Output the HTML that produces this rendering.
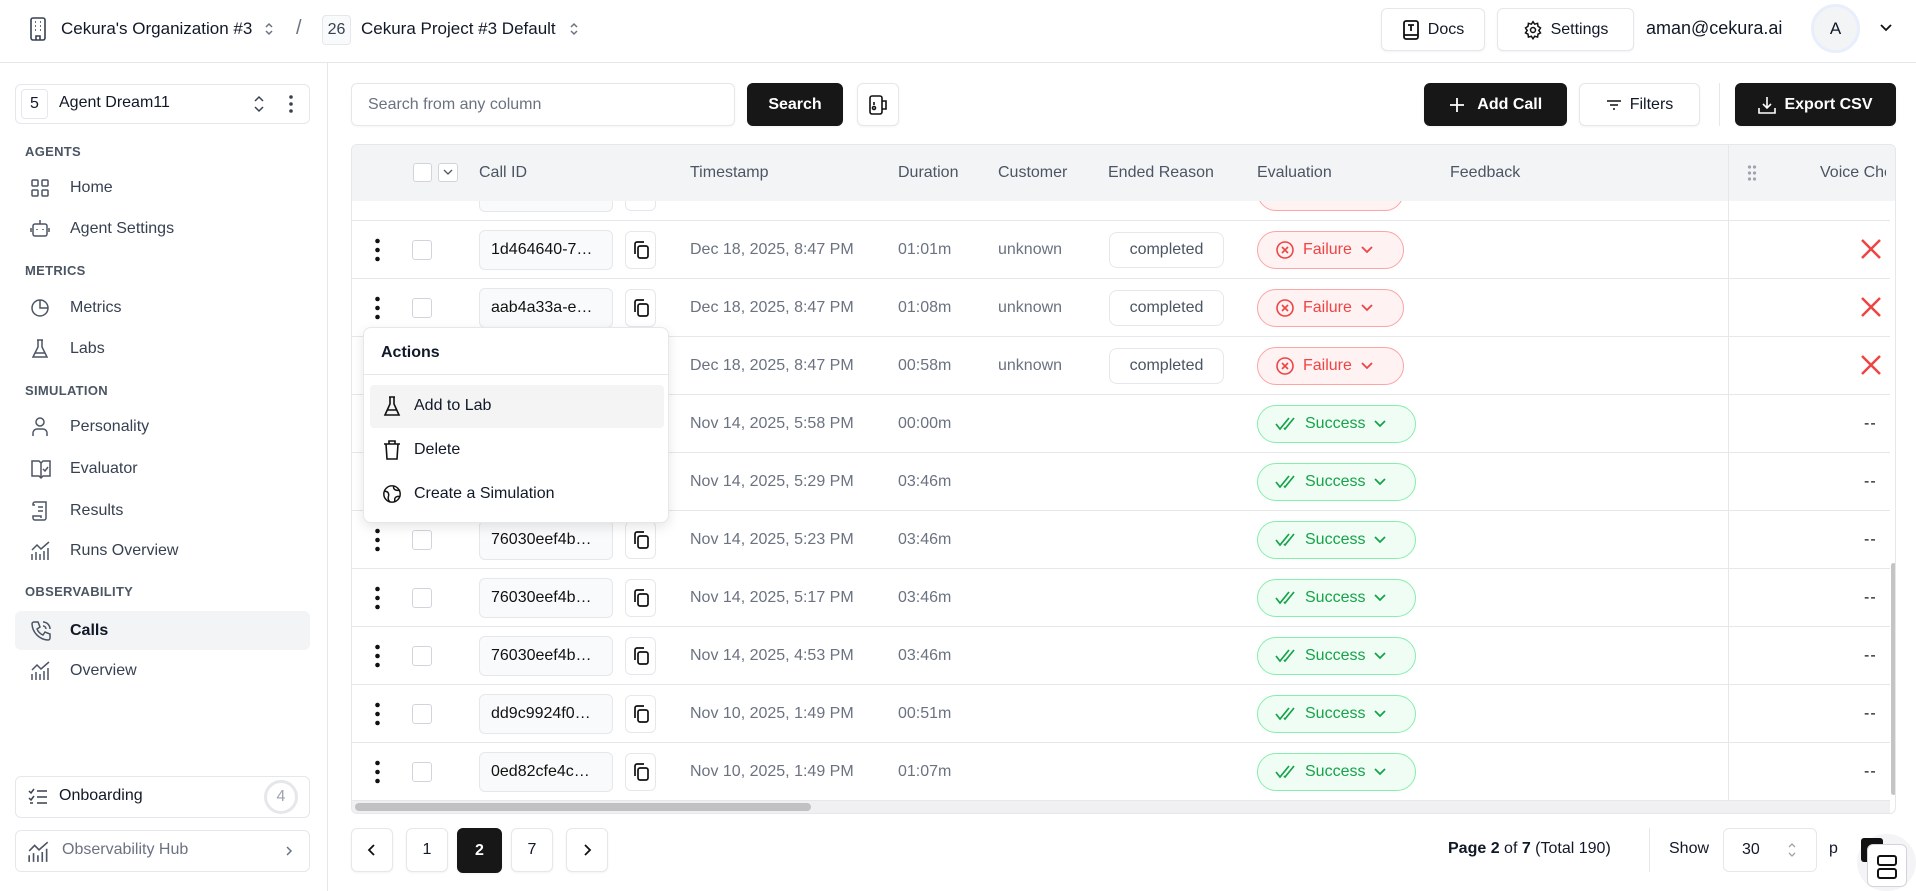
<!DOCTYPE html>
<html><head><meta charset="utf-8">
<style>
*{box-sizing:border-box;margin:0;padding:0}
body{width:1916px;height:891px;position:relative;overflow:hidden;background:#fff;font-family:"Liberation Sans",sans-serif;color:#111827;font-size:16px}
.a{position:absolute}
.btn{position:absolute;border:1px solid #e5e7eb;border-radius:6px;background:#fff;display:flex;align-items:center;justify-content:center;gap:8px;font-size:16px;box-shadow:0 1px 2px rgba(0,0,0,.05)}
.dark{background:#171717;color:#fff;border-color:#171717;font-weight:bold}
.sec{position:absolute;left:25px;font-size:13px;font-weight:bold;color:#4b5563;letter-spacing:.3px}
.it{position:absolute;left:15px;width:295px;height:39px;display:flex;align-items:center;font-size:16px;color:#374151}
.it svg{position:absolute;left:15px}
.it span{position:absolute;left:55px}
.row{position:absolute;left:351px;width:1538px;height:58px;border-bottom:1px solid #e5e7eb;background:#fff}
.row>*{position:absolute}
.dots{left:23px;top:17px;width:5px;height:24px}
.cb{left:60px;top:19px;width:20px;height:20px;border:1px solid #d1d5db;border-radius:3px;background:#fff}
.id{left:127px;top:9px;width:134px;height:40px;background:#f9fafb;border:1px solid #e5e7eb;border-radius:6px;padding-left:11px;line-height:38px;color:#111;white-space:nowrap;overflow:hidden}
.cp{left:273px;top:10px;width:31px;height:38px;border:1px solid #e5e7eb;border-radius:6px;display:flex;align-items:center;justify-content:center}
.ts{left:338px;top:20px;color:#6b7280}
.du{left:546px;top:20px;color:#6b7280}
.cu{left:646px;top:20px;color:#6b7280}
.er{left:757px;top:11px;width:115px;height:36px;border:1px solid #e5e7eb;border-radius:8px;text-align:center;line-height:34px;color:#4b5563}
.fail{left:905px;top:10px;width:147px;height:38px;border:1px solid #fca5a5;background:#fef2f2;border-radius:19px;color:#ef4444;display:flex;align-items:center;padding-left:17px;gap:8px}
.succ{left:905px;top:10px;width:159px;height:38px;border:1px solid #86efac;background:#f0fdf4;border-radius:19px;color:#16a34a;display:flex;align-items:center;padding-left:17px;gap:8px}
.vd{left:1376px;top:0;width:1px;height:58px;background:#e5e7eb}
.x{left:1507px;top:16px}
.dd{left:1512px;top:20px;color:#111;letter-spacing:1px}
</style></head><body>

<div class="a" style="left:0;top:62px;width:1916px;height:1px;background:#e5e7eb"></div>
<svg class="a" style="left:26px;top:16px" width="24" height="26" viewBox="0 0 24 26" fill="none" stroke="#374151" stroke-width="1.6"><rect x="5" y="2" width="14" height="22" rx="2"/><path d="M9 6h1M14 6h1M9 10h1M14 10h1M9 14h1M14 14h1M10 24v-4h4v4"/></svg>
<div class="a" style="left:61px;top:19px;font-size:17px">Cekura's Organization #3</div>
<svg class="a" style="left:263px;top:20px" width="12" height="18" viewBox="0 0 12 18" fill="none" stroke="#6b7280" stroke-width="1.5"><path d="M3 7l3-3 3 3M3 11l3 3 3-3"/></svg>
<div class="a" style="left:296px;top:17px;font-size:20px;color:#6b7280">/</div>
<div class="a" style="left:322px;top:15px;width:29px;height:30px;border:1px solid #e5e7eb;background:#f9fafb;border-radius:4px;text-align:center;line-height:28px;font-size:16px;color:#374151">26</div>
<div class="a" style="left:361px;top:19px;font-size:17px">Cekura Project #3 Default</div>
<svg class="a" style="left:568px;top:20px" width="12" height="18" viewBox="0 0 12 18" fill="none" stroke="#6b7280" stroke-width="1.5"><path d="M3 7l3-3 3 3M3 11l3 3 3-3"/></svg>

<div class="btn" style="left:1381px;top:8px;width:104px;height:43px"><svg width="18" height="22" viewBox="0 0 18 22" fill="none" stroke="#111" stroke-width="1.8"><rect x="2" y="2" width="14" height="18" rx="2"/><path d="M6 6h6M9 6v6M2 16h14"/></svg>Docs</div>
<div class="btn" style="left:1497px;top:8px;width:137px;height:43px"><svg width="20" height="20" viewBox="0 0 24 24" fill="none" stroke="#111" stroke-width="1.8"><circle cx="12" cy="12" r="3"/><path d="M12 2l2 3 3.5-1 .5 3.5 3 2-2 3 2 3-3 1.5-.5 3.5-3.5-1-2 3-2-3-3.5 1-.5-3.5-3-1.5 2-3-2-3 3-2 .5-3.5 3.5 1z"/></svg>Settings</div>
<div class="a" style="left:1646px;top:18px;font-size:18px">aman@cekura.ai</div>
<div class="a" style="left:1811px;top:4px;width:49px;height:49px;border-radius:50%;background:#f3f4f6;border:3px solid #e8eefc;text-align:center;line-height:43px;font-size:17px">A</div>
<svg class="a" style="left:1879px;top:22px" width="14" height="12" viewBox="0 0 14 12" fill="none" stroke="#111" stroke-width="1.8"><path d="M2 3l5 5 5-5"/></svg>

<div class="a" style="left:327px;top:63px;width:1px;height:828px;background:#e5e7eb"></div>
<div class="a" style="left:15px;top:84px;width:295px;height:40px;border:1px solid #e5e7eb;border-radius:6px"></div>
<div class="a" style="left:21px;top:89px;width:27px;height:30px;border:1px solid #e5e7eb;border-radius:4px;text-align:center;line-height:28px">5</div>
<div class="a" style="left:59px;top:94px;font-size:16px">Agent Dream11</div>
<svg class="a" style="left:252px;top:94px" width="14" height="20" viewBox="0 0 14 20" fill="none" stroke="#374151" stroke-width="1.5"><path d="M3 7l4-4 4 4M3 13l4 4 4-4"/></svg>
<svg class="a" style="left:288px;top:94px" width="6" height="20" viewBox="0 0 6 20" fill="#374151"><circle cx="3" cy="3" r="1.8"/><circle cx="3" cy="10" r="1.8"/><circle cx="3" cy="17" r="1.8"/></svg>

<div class="sec" style="top:144px">AGENTS</div>
<div class="it" style="top:168px"><svg width="20" height="20" viewBox="0 0 20 20" fill="none" stroke="#4b5563" stroke-width="1.5"><rect x="2" y="2" width="6" height="6" rx="1"/><rect x="12" y="2" width="6" height="6" rx="1"/><rect x="2" y="12" width="6" height="6" rx="1"/><rect x="12" y="12" width="6" height="6" rx="1"/></svg><span>Home</span></div>
<div class="it" style="top:209px"><svg width="20" height="22" viewBox="0 0 20 22" fill="none" stroke="#4b5563" stroke-width="1.5"><rect x="3" y="6" width="14" height="12" rx="2"/><path d="M10 2v4M7 11v1M13 11v1M1 10v4M19 10v4"/></svg><span>Agent Settings</span></div>
<div class="sec" style="top:263px">METRICS</div>
<div class="it" style="top:288px"><svg width="20" height="20" viewBox="0 0 20 20" fill="none" stroke="#4b5563" stroke-width="1.5"><circle cx="10" cy="10" r="8"/><path d="M10 2v8h8"/></svg><span>Metrics</span></div>
<div class="it" style="top:329px"><svg width="20" height="22" viewBox="0 0 20 22" fill="none" stroke="#4b5563" stroke-width="1.5"><path d="M7 2h6M8 2v7L3 19h14L12 9V2M5 15h10"/></svg><span>Labs</span></div>
<div class="sec" style="top:383px">SIMULATION</div>
<div class="it" style="top:407px"><svg width="20" height="22" viewBox="0 0 20 22" fill="none" stroke="#4b5563" stroke-width="1.5"><circle cx="10" cy="6" r="4"/><path d="M3 20v-3a4 4 0 014-4h6a4 4 0 014 4v3"/></svg><span>Personality</span></div>
<div class="it" style="top:449px"><svg width="22" height="22" viewBox="0 0 22 22" fill="none" stroke="#4b5563" stroke-width="1.5"><path d="M2 3h7l2 2 2-2h7v15h-7l-2 2-2-2H2zM11 5v15M13 11l2 2 3-4"/></svg><span>Evaluator</span></div>
<div class="it" style="top:491px"><svg width="20" height="22" viewBox="0 0 20 22" fill="none" stroke="#4b5563" stroke-width="1.5"><path d="M5 2h11v16a2 2 0 01-2 2H5a2 2 0 01-2-2v-2h8v2M5 2a2 2 0 00-2 2v1h2M8 7h5M8 11h5"/></svg><span>Results</span></div>
<div class="it" style="top:531px"><svg width="22" height="22" viewBox="0 0 22 22" fill="none" stroke="#4b5563" stroke-width="1.5"><path d="M2 20V14M6 20v-8M10 20v-6M14 20v-9M18 20v-12M2 10l5-5 4 4 8-7"/></svg><span>Runs Overview</span></div>
<div class="sec" style="top:584px">OBSERVABILITY</div>
<div class="it" style="top:611px;background:#f3f4f6;border-radius:6px;color:#111827;font-weight:bold"><svg width="22" height="22" viewBox="0 0 22 22" fill="none" stroke="#4b5563" stroke-width="1.5"><path d="M4 2h4l2 5-3 2a11 11 0 006 6l2-3 5 2v4a2 2 0 01-2 2A17 17 0 012 4a2 2 0 012-2zM13 2a7 7 0 017 7M13 6a3 3 0 013 3"/></svg><span>Calls</span></div>
<div class="it" style="top:651px"><svg width="22" height="22" viewBox="0 0 22 22" fill="none" stroke="#4b5563" stroke-width="1.5"><path d="M2 20V14M6 20v-8M10 20v-6M14 20v-9M18 20v-12M2 10l5-5 4 4 8-7"/></svg><span>Overview</span></div>

<div class="a" style="left:15px;top:776px;width:295px;height:42px;border:1px solid #e5e7eb;border-radius:6px"></div>
<svg class="a" style="left:28px;top:787px" width="20" height="20" viewBox="0 0 20 20" fill="none" stroke="#374151" stroke-width="1.5"><path d="M1 4l2 2 3-4M1 11l2 2 3-4M9 4h10M9 10h10M9 16h10M2 16h3"/></svg>
<div class="a" style="left:59px;top:787px;font-size:16px">Onboarding</div>
<div class="a" style="left:264px;top:780px;width:34px;height:34px;border-radius:50%;border:3px solid #e5e7eb;text-align:center;line-height:28px;color:#9ca3af;font-size:16px">4</div>
<div class="a" style="left:15px;top:830px;width:295px;height:42px;border:1px solid #e5e7eb;border-radius:6px"></div>
<svg class="a" style="left:27px;top:840px" width="24" height="24" viewBox="0 0 22 22" fill="none" stroke="#4b5563" stroke-width="1.5"><path d="M2 20V14M6 20v-8M10 20v-6M14 20v-9M18 20v-12M2 10l5-5 4 4 8-7"/></svg>
<div class="a" style="left:62px;top:841px;font-size:16px;color:#6b7280">Observability Hub</div>
<svg class="a" style="left:285px;top:845px" width="8" height="12" viewBox="0 0 8 12" fill="none" stroke="#6b7280" stroke-width="1.5"><path d="M2 2l4 4-4 4"/></svg>

<div class="a" style="left:351px;top:83px;width:384px;height:43px;border:1px solid #e5e7eb;border-radius:6px;padding-left:16px;line-height:41px;color:#6b7280;box-shadow:0 1px 2px rgba(0,0,0,.04)">Search from any column</div>
<div class="btn dark" style="left:747px;top:83px;width:96px;height:43px">Search</div>
<div class="btn" style="left:857px;top:83px;width:42px;height:43px"><svg width="20" height="22" viewBox="0 0 20 22" fill="none" stroke="#111" stroke-width="1.6"><rect x="2" y="2" width="12" height="18" rx="2"/><path d="M14 7h4v8h-4"/><circle cx="6" cy="14" r="1.5"/><path d="M6 8v3"/></svg></div>
<div class="btn dark" style="left:1424px;top:83px;width:143px;height:43px"><svg width="16" height="16" viewBox="0 0 16 16" stroke="#fff" stroke-width="1.8"><path d="M8 1v14M1 8h14"/></svg>&nbsp;Add Call</div>
<div class="btn" style="left:1579px;top:83px;width:121px;height:43px"><svg width="16" height="12" viewBox="0 0 16 12" stroke="#111" stroke-width="1.6"><path d="M1 2h14M4 6h8M7 10h2"/></svg>Filters</div>
<div class="a" style="left:1719px;top:83px;width:1px;height:43px;background:#e5e7eb"></div>
<div class="btn dark" style="left:1735px;top:83px;width:161px;height:43px"><svg width="18" height="18" viewBox="0 0 18 18" fill="none" stroke="#fff" stroke-width="1.6"><path d="M9 1v11M5 8l4 4 4-4M1 12v5h16v-5"/></svg>Export CSV</div>

<div class="a" style="left:351px;top:144px;width:1545px;height:670px;border:1px solid #e5e7eb;border-radius:6px;overflow:hidden">
<div style="position:absolute;left:-351px;top:-144px;width:1916px;height:891px">

<div class="row" style="top:162px"><div class="id"></div><div class="cp"></div><div class="fail"></div><div class="vd"></div></div>

<div class="row" style="top:220px"><svg class="dots" viewBox="0 0 5 24" fill="#111"><circle cx="2.5" cy="3" r="2.3"/><circle cx="2.5" cy="12" r="2.3"/><circle cx="2.5" cy="21" r="2.3"/></svg><div class="cb"></div><div class="id">1d464640-7…</div><div class="cp"><svg width="18" height="20" viewBox="0 0 18 20" fill="none" stroke="#111" stroke-width="1.7"><rect x="6" y="6" width="10" height="12" rx="2"/><path d="M3 14V4a2 2 0 012-2h7"/></svg></div><div class="ts">Dec 18, 2025, 8:47 PM</div><div class="du">01:01m</div><div class="cu">unknown</div><div class="er">completed</div><div class="fail"><svg width="20" height="20" viewBox="0 0 20 20" fill="none" stroke="#ef4444" stroke-width="1.6"><circle cx="10" cy="10" r="8"/><path d="M7 7l6 6M13 7l-6 6"/></svg>Failure<svg width="14" height="10" viewBox="0 0 14 10" fill="none" stroke="#ef4444" stroke-width="1.8"><path d="M2 2l5 5 5-5"/></svg></div><div class="vd"></div><svg class="x" width="24" height="24" viewBox="0 0 24 24" stroke="#ef4444" stroke-width="2.5"><path d="M3 3l18 18M21 3L3 21"/></svg></div>

<div class="row" style="top:278px"><svg class="dots" viewBox="0 0 5 24" fill="#111"><circle cx="2.5" cy="3" r="2.3"/><circle cx="2.5" cy="12" r="2.3"/><circle cx="2.5" cy="21" r="2.3"/></svg><div class="cb"></div><div class="id">aab4a33a-e…</div><div class="cp"><svg width="18" height="20" viewBox="0 0 18 20" fill="none" stroke="#111" stroke-width="1.7"><rect x="6" y="6" width="10" height="12" rx="2"/><path d="M3 14V4a2 2 0 012-2h7"/></svg></div><div class="ts">Dec 18, 2025, 8:47 PM</div><div class="du">01:08m</div><div class="cu">unknown</div><div class="er">completed</div><div class="fail"><svg width="20" height="20" viewBox="0 0 20 20" fill="none" stroke="#ef4444" stroke-width="1.6"><circle cx="10" cy="10" r="8"/><path d="M7 7l6 6M13 7l-6 6"/></svg>Failure<svg width="14" height="10" viewBox="0 0 14 10" fill="none" stroke="#ef4444" stroke-width="1.8"><path d="M2 2l5 5 5-5"/></svg></div><div class="vd"></div><svg class="x" width="24" height="24" viewBox="0 0 24 24" stroke="#ef4444" stroke-width="2.5"><path d="M3 3l18 18M21 3L3 21"/></svg></div>

<div class="row" style="top:336px"><div class="ts">Dec 18, 2025, 8:47 PM</div><div class="du">00:58m</div><div class="cu">unknown</div><div class="er">completed</div><div class="fail"><svg width="20" height="20" viewBox="0 0 20 20" fill="none" stroke="#ef4444" stroke-width="1.6"><circle cx="10" cy="10" r="8"/><path d="M7 7l6 6M13 7l-6 6"/></svg>Failure<svg width="14" height="10" viewBox="0 0 14 10" fill="none" stroke="#ef4444" stroke-width="1.8"><path d="M2 2l5 5 5-5"/></svg></div><div class="vd"></div><svg class="x" width="24" height="24" viewBox="0 0 24 24" stroke="#ef4444" stroke-width="2.5"><path d="M3 3l18 18M21 3L3 21"/></svg></div>

<div class="row" style="top:394px"><div class="ts">Nov 14, 2025, 5:58 PM</div><div class="du">00:00m</div><div class="succ"><svg width="22" height="16" viewBox="0 0 22 16" fill="none" stroke="#16a34a" stroke-width="1.7"><path d="M1 8l4 5 9-11M9 12l1 1 9-11"/></svg>Success<svg width="14" height="10" viewBox="0 0 14 10" fill="none" stroke="#16a34a" stroke-width="1.8"><path d="M2 2l5 5 5-5"/></svg></div><div class="vd"></div><div class="dd">--</div></div>

<div class="row" style="top:452px"><div class="ts">Nov 14, 2025, 5:29 PM</div><div class="du">03:46m</div><div class="succ"><svg width="22" height="16" viewBox="0 0 22 16" fill="none" stroke="#16a34a" stroke-width="1.7"><path d="M1 8l4 5 9-11M9 12l1 1 9-11"/></svg>Success<svg width="14" height="10" viewBox="0 0 14 10" fill="none" stroke="#16a34a" stroke-width="1.8"><path d="M2 2l5 5 5-5"/></svg></div><div class="vd"></div><div class="dd">--</div></div>

<div class="row" style="top:510px"><svg class="dots" viewBox="0 0 5 24" fill="#111"><circle cx="2.5" cy="3" r="2.3"/><circle cx="2.5" cy="12" r="2.3"/><circle cx="2.5" cy="21" r="2.3"/></svg><div class="cb"></div><div class="id">76030eef4b…</div><div class="cp"><svg width="18" height="20" viewBox="0 0 18 20" fill="none" stroke="#111" stroke-width="1.7"><rect x="6" y="6" width="10" height="12" rx="2"/><path d="M3 14V4a2 2 0 012-2h7"/></svg></div><div class="ts">Nov 14, 2025, 5:23 PM</div><div class="du">03:46m</div><div class="succ"><svg width="22" height="16" viewBox="0 0 22 16" fill="none" stroke="#16a34a" stroke-width="1.7"><path d="M1 8l4 5 9-11M9 12l1 1 9-11"/></svg>Success<svg width="14" height="10" viewBox="0 0 14 10" fill="none" stroke="#16a34a" stroke-width="1.8"><path d="M2 2l5 5 5-5"/></svg></div><div class="vd"></div><div class="dd">--</div></div>

<div class="row" style="top:568px"><svg class="dots" viewBox="0 0 5 24" fill="#111"><circle cx="2.5" cy="3" r="2.3"/><circle cx="2.5" cy="12" r="2.3"/><circle cx="2.5" cy="21" r="2.3"/></svg><div class="cb"></div><div class="id">76030eef4b…</div><div class="cp"><svg width="18" height="20" viewBox="0 0 18 20" fill="none" stroke="#111" stroke-width="1.7"><rect x="6" y="6" width="10" height="12" rx="2"/><path d="M3 14V4a2 2 0 012-2h7"/></svg></div><div class="ts">Nov 14, 2025, 5:17 PM</div><div class="du">03:46m</div><div class="succ"><svg width="22" height="16" viewBox="0 0 22 16" fill="none" stroke="#16a34a" stroke-width="1.7"><path d="M1 8l4 5 9-11M9 12l1 1 9-11"/></svg>Success<svg width="14" height="10" viewBox="0 0 14 10" fill="none" stroke="#16a34a" stroke-width="1.8"><path d="M2 2l5 5 5-5"/></svg></div><div class="vd"></div><div class="dd">--</div></div>

<div class="row" style="top:626px"><svg class="dots" viewBox="0 0 5 24" fill="#111"><circle cx="2.5" cy="3" r="2.3"/><circle cx="2.5" cy="12" r="2.3"/><circle cx="2.5" cy="21" r="2.3"/></svg><div class="cb"></div><div class="id">76030eef4b…</div><div class="cp"><svg width="18" height="20" viewBox="0 0 18 20" fill="none" stroke="#111" stroke-width="1.7"><rect x="6" y="6" width="10" height="12" rx="2"/><path d="M3 14V4a2 2 0 012-2h7"/></svg></div><div class="ts">Nov 14, 2025, 4:53 PM</div><div class="du">03:46m</div><div class="succ"><svg width="22" height="16" viewBox="0 0 22 16" fill="none" stroke="#16a34a" stroke-width="1.7"><path d="M1 8l4 5 9-11M9 12l1 1 9-11"/></svg>Success<svg width="14" height="10" viewBox="0 0 14 10" fill="none" stroke="#16a34a" stroke-width="1.8"><path d="M2 2l5 5 5-5"/></svg></div><div class="vd"></div><div class="dd">--</div></div>

<div class="row" style="top:684px"><svg class="dots" viewBox="0 0 5 24" fill="#111"><circle cx="2.5" cy="3" r="2.3"/><circle cx="2.5" cy="12" r="2.3"/><circle cx="2.5" cy="21" r="2.3"/></svg><div class="cb"></div><div class="id">dd9c9924f0…</div><div class="cp"><svg width="18" height="20" viewBox="0 0 18 20" fill="none" stroke="#111" stroke-width="1.7"><rect x="6" y="6" width="10" height="12" rx="2"/><path d="M3 14V4a2 2 0 012-2h7"/></svg></div><div class="ts">Nov 10, 2025, 1:49 PM</div><div class="du">00:51m</div><div class="succ"><svg width="22" height="16" viewBox="0 0 22 16" fill="none" stroke="#16a34a" stroke-width="1.7"><path d="M1 8l4 5 9-11M9 12l1 1 9-11"/></svg>Success<svg width="14" height="10" viewBox="0 0 14 10" fill="none" stroke="#16a34a" stroke-width="1.8"><path d="M2 2l5 5 5-5"/></svg></div><div class="vd"></div><div class="dd">--</div></div>

<div class="row" style="top:742px"><svg class="dots" viewBox="0 0 5 24" fill="#111"><circle cx="2.5" cy="3" r="2.3"/><circle cx="2.5" cy="12" r="2.3"/><circle cx="2.5" cy="21" r="2.3"/></svg><div class="cb"></div><div class="id">0ed82cfe4c…</div><div class="cp"><svg width="18" height="20" viewBox="0 0 18 20" fill="none" stroke="#111" stroke-width="1.7"><rect x="6" y="6" width="10" height="12" rx="2"/><path d="M3 14V4a2 2 0 012-2h7"/></svg></div><div class="ts">Nov 10, 2025, 1:49 PM</div><div class="du">01:07m</div><div class="succ"><svg width="22" height="16" viewBox="0 0 22 16" fill="none" stroke="#16a34a" stroke-width="1.7"><path d="M1 8l4 5 9-11M9 12l1 1 9-11"/></svg>Success<svg width="14" height="10" viewBox="0 0 14 10" fill="none" stroke="#16a34a" stroke-width="1.8"><path d="M2 2l5 5 5-5"/></svg></div><div class="vd"></div><div class="dd">--</div></div>

<div class="a" style="left:351px;top:144px;width:1545px;height:56px;background:#f3f4f6;color:#4b5563">
 <div class="a" style="left:61px;top:18px;width:19px;height:19px;border:1px solid #d1d5db;border-radius:3px;background:#fff"></div>
 <div class="a" style="left:86px;top:18px;width:20px;height:19px;border:1px solid #d1d5db;border-radius:3px;background:#fff"><svg class="a" style="left:4px;top:5px" width="10" height="7" viewBox="0 0 10 7" fill="none" stroke="#4b5563" stroke-width="1.3"><path d="M1 1l4 4 4-4"/></svg></div>
 <div class="a" style="left:127px;top:19px">Call ID</div>
 <div class="a" style="left:338px;top:19px">Timestamp</div>
 <div class="a" style="left:546px;top:19px">Duration</div>
 <div class="a" style="left:646px;top:19px">Customer</div>
 <div class="a" style="left:756px;top:19px">Ended Reason</div>
 <div class="a" style="left:905px;top:19px">Evaluation</div>
 <div class="a" style="left:1098px;top:19px">Feedback</div>
 <div class="a" style="left:1376px;top:0;width:1px;height:56px;background:#e5e7eb"></div>
 <svg class="a" style="left:1395px;top:19px" width="10" height="18" viewBox="0 0 10 18" fill="#9ca3af"><circle cx="2.5" cy="3" r="1.6"/><circle cx="7.5" cy="3" r="1.6"/><circle cx="2.5" cy="9" r="1.6"/><circle cx="7.5" cy="9" r="1.6"/><circle cx="2.5" cy="15" r="1.6"/><circle cx="7.5" cy="15" r="1.6"/></svg>
 <div class="a" style="left:1468px;top:19px;white-space:nowrap;width:66px;overflow:hidden">Voice Check</div>
</div>
<div class="a" style="left:1889px;top:200px;width:7px;height:600px;background:#fff"></div>
<div class="a" style="left:1890px;top:562px;width:5px;height:232px;background:#c4c4c4;border-radius:3px"></div>
<div class="a" style="left:351px;top:800px;width:1538px;height:14px;background:#f0f0f0"></div>
<div class="a" style="left:354px;top:802px;width:456px;height:8px;background:#c1c1c1;border-radius:4px"></div>
</div></div>

<div class="a" style="left:363px;top:327px;width:306px;height:196px;background:#fff;border:1px solid #e5e7eb;border-radius:8px;box-shadow:0 4px 12px rgba(0,0,0,.1)">
 <div class="a" style="left:17px;top:16px;font-weight:bold;font-size:16px">Actions</div>
 <div class="a" style="left:0;top:46px;width:304px;height:1px;background:#e5e7eb"></div>
 <div class="a" style="left:6px;top:57px;width:294px;height:43px;background:#f4f4f5;border-radius:4px"></div>
 <svg class="a" style="left:18px;top:67px" width="20" height="22" viewBox="0 0 20 22" fill="none" stroke="#111" stroke-width="1.6"><path d="M7 2h6M8 2v7L3 20h14L12 9V2M5 15h10"/></svg>
 <div class="a" style="left:50px;top:69px">Add to Lab</div>
 <svg class="a" style="left:18px;top:111px" width="20" height="22" viewBox="0 0 20 22" fill="none" stroke="#111" stroke-width="1.6"><path d="M2 5h16M7 5V2h6v3M4 5l1 15h10l1-15"/></svg>
 <div class="a" style="left:50px;top:113px">Delete</div>
 <svg class="a" style="left:18px;top:155px" width="20" height="22" viewBox="0 0 22 22" fill="none" stroke="#111" stroke-width="1.6"><circle cx="11" cy="11" r="9"/><path d="M3 8c4 0 5 3 4 6s1 5 2 6M13 2c-1 3 1 5 4 5h3M20 14c-3-1-6 0-6 3v3"/></svg>
 <div class="a" style="left:50px;top:157px">Create a Simulation</div>
</div>

<div class="btn" style="left:351px;top:828px;width:42px;height:44px"><svg width="10" height="14" viewBox="0 0 10 14" fill="none" stroke="#111" stroke-width="1.8"><path d="M7 2L2 7l5 5"/></svg></div>
<div class="btn" style="left:406px;top:828px;width:42px;height:44px">1</div>
<div class="btn dark" style="left:457px;top:828px;width:45px;height:45px">2</div>
<div class="btn" style="left:511px;top:828px;width:42px;height:44px">7</div>
<div class="btn" style="left:566px;top:828px;width:42px;height:44px"><svg width="10" height="14" viewBox="0 0 10 14" fill="none" stroke="#111" stroke-width="1.8"><path d="M3 2l5 5-5 5"/></svg></div>
<div class="a" style="left:1448px;top:840px;font-size:16px"><b>Page 2</b> of <b>7</b> (Total 190)</div>
<div class="a" style="left:1649px;top:828px;width:1px;height:44px;background:#e5e7eb"></div>
<div class="a" style="left:1669px;top:840px">Show</div>
<div class="a" style="left:1723px;top:828px;width:94px;height:44px;border:1px solid #e5e7eb;border-radius:6px;padding-left:18px;line-height:42px">30</div>
<svg class="a" style="left:1787px;top:841px" width="10" height="18" viewBox="0 0 10 18" fill="none" stroke="#9ca3af" stroke-width="1.3"><path d="M2 6l3-3 3 3M2 12l3 3 3-3"/></svg>
<div class="a" style="left:1829px;top:840px">p</div>
<div class="a" style="left:1857px;top:834px;width:59px;height:57px;border-radius:30px;background:#f3f4f6"></div>
<div class="a" style="left:1861px;top:838px;width:22px;height:24px;background:#111;border-radius:3px"></div>
<div class="a" style="left:1867px;top:844px;width:40px;height:43px;border:1px solid #d1d5db;border-radius:6px;background:#fff"></div>
<svg class="a" style="left:1876px;top:854px" width="22" height="26" viewBox="0 0 22 26" fill="none" stroke="#111" stroke-width="2"><rect x="2" y="2" width="18" height="9" rx="2"/><rect x="2" y="15" width="18" height="9" rx="2"/></svg>

</body></html>
